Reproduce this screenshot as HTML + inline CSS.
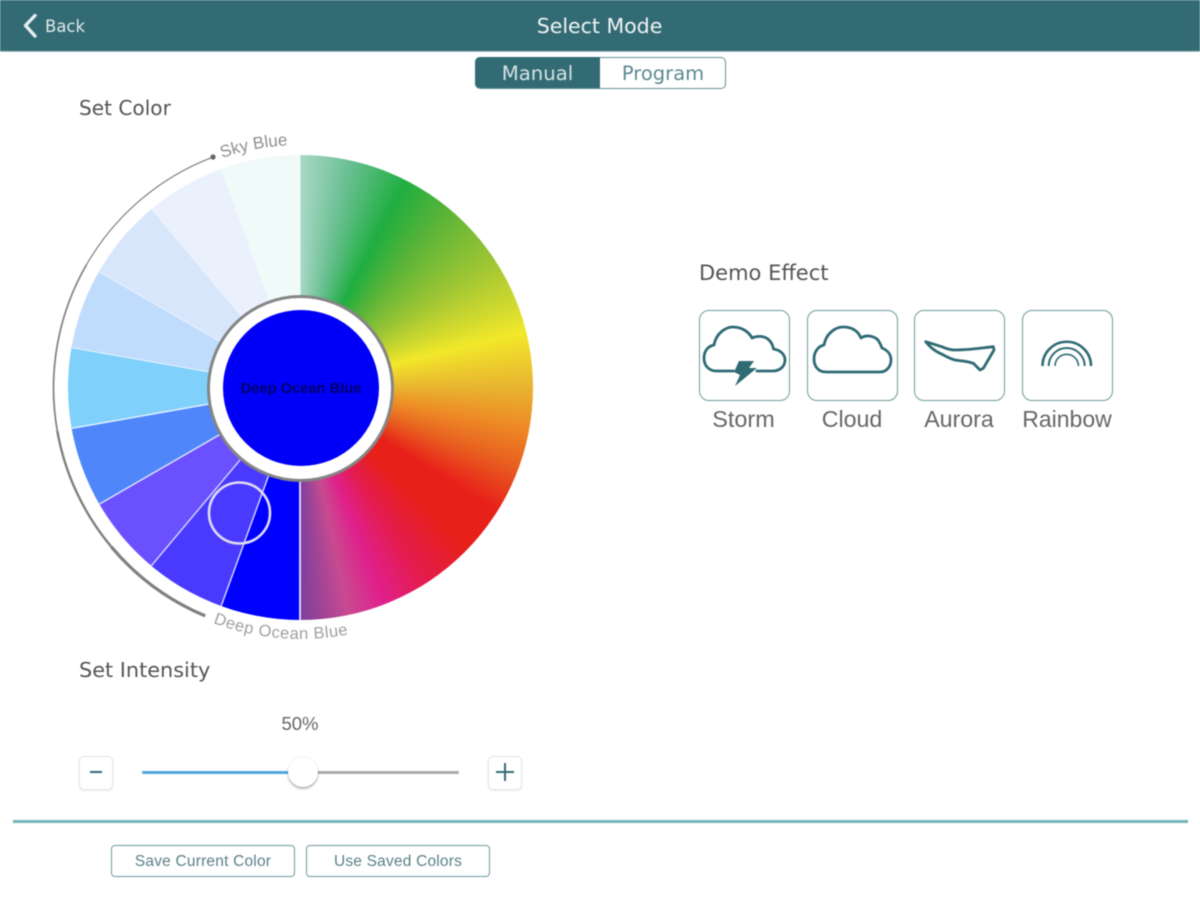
<!DOCTYPE html>
<html><head><meta charset="utf-8"><title>Select Mode</title>
<style>
html,body{margin:0;padding:0;background:#fff}
#r{position:relative;width:1200px;height:900px;overflow:hidden;background:#fff;filter:blur(.55px);font-family:"Liberation Sans",sans-serif}
.t{position:absolute;white-space:nowrap;line-height:1}
.n{font-family:"DejaVu Sans","Liberation Sans",sans-serif}
.c{transform:translateX(-50%)}
#wheel{position:absolute;left:68px;top:155px;width:465px;height:465px;border-radius:50%;
background:conic-gradient(#a9d8c6 0deg,#6cc094 12deg,#1fae40 27deg,#5cb438 40deg,#9cc534 56deg,#d2da2e 69deg,#f2e82a 76deg,#e8b430 90deg,#ee8a25 100deg,#e85f20 110deg,#e8201a 122deg,#e8201a 134deg,#e41c50 148deg,#e0208c 159deg,#c84a90 168deg,#7d3f9c 180deg,
#0000ff 180deg 200deg,#4a3aff 200deg 220deg,#6a50ff 220deg 240deg,#4f87fb 240deg 260deg,#80d0fc 260deg 280deg,#c0dcfc 280deg 300deg,#d8e6fc 300deg 320deg,#eaf1fd 320deg 340deg,#f0faf9 340deg 360deg)}
#ring{position:absolute;left:207px;top:295px;width:181px;height:181px;border:3px solid #858585;border-radius:50%;background:#fff}
#blue{position:absolute;left:222.5px;top:310px;width:156px;height:156px;border-radius:50%;background:#0000f8}
.box{position:absolute;top:310px;width:89px;height:89px;border:1.5px solid #6f9a9c;border-radius:10px;background:#fff}
.btn{position:absolute;top:845px;height:30px;border:1.5px solid #6f9a9c;border-radius:4px;background:#fff;color:#5a8088;font-size:15.5px;letter-spacing:.2px;line-height:32px;text-align:center}
.sq{position:absolute;top:756px;width:32px;height:32px;border:1px solid #e4e4e4;border-radius:5px;background:#fff;box-shadow:0 1px 2px rgba(0,0,0,.08)}
svg{position:absolute;left:0;top:0}
</style></head>
<body><div id="r">
<div style="position:absolute;left:0;top:0;width:1200px;height:51px;background:#336b75;border-bottom:1px solid #a7c8cc"></div>
<div class="t n" style="left:45px;top:18.5px;font-size:16.5px;color:#dfe9ea">Back</div>
<div class="t n c" style="left:599.5px;top:16px;font-size:20.5px;color:#f0f5f5">Select Mode</div>

<div style="position:absolute;left:475px;top:57px;width:249px;height:30px;border:1px solid #5f9296;border-radius:5px;background:#fff"></div>
<div style="position:absolute;left:475px;top:57px;width:125px;height:31px;background:#336b75;border-radius:5px 0 0 5px"></div>
<div class="t n c" style="left:537.5px;top:64px;font-size:19.7px;color:#d5e2e3">Manual</div>
<div class="t n c" style="left:663px;top:64px;font-size:19.5px;color:#5c8a90">Program</div>

<div class="t n" style="left:79px;top:98px;font-size:20.1px;color:#555">Set Color</div>
<div class="t n" style="left:79px;top:660px;font-size:20.8px;color:#555">Set Intensity</div>
<div class="t n" style="left:699px;top:263px;font-size:21px;color:#555">Demo Effect</div>

<div id="wheel"></div>
<svg width="1200" height="900" viewBox="0 0 1200 900" fill="none">
<g stroke-linecap="butt">
<line x1="300" y1="478" x2="300" y2="620" stroke="#d8d0ff" stroke-width="2"/>
<line x1="268.7" y1="475.4" x2="221.2" y2="606" stroke="#d8d8ff" stroke-width="1.4"/>
<line x1="240.7" y1="459.2" x2="151.4" y2="565.7" stroke="#d8d8ff" stroke-width="1.4"/>
<line x1="220" y1="434.5" x2="99.6" y2="504" stroke="#e0e4ff" stroke-width="1.4"/>
<line x1="208.9" y1="404.1" x2="72" y2="428.3" stroke="#e8f4ff" stroke-width="1.4"/>
<line x1="209" y1="371.9" x2="72" y2="347.7" stroke="#e8f4ff" stroke-width="1"/>
<line x1="220" y1="341.5" x2="99.6" y2="272" stroke="#edf4ff" stroke-width="1"/>
</g>
<circle cx="239.5" cy="513" r="30.5" stroke="#dedcf4" stroke-width="2.6"/>
<g stroke="#808080">
<path d="M212 157.4A247 247 0 0 0 86.6 264.5" stroke-width="1.2"/>
<path d="M86.6 264.5A247 247 0 0 0 57.3 430.9" stroke-width="1.7"/>
<path d="M57.3 430.9A247 247 0 0 0 111.3 546.8" stroke-width="2.4"/>
<path d="M111.3 546.8A247 247 0 0 0 205.2 615.9" stroke-width="3.2"/>
</g>
<circle cx="213" cy="157" r="2.6" fill="#666"/>
<path id="a1" d="M222 158A243 243 0 0 1 300 145"/>
<path id="a2" d="M213 623A251 251 0 0 0 360 632"/>
<text font-family="Liberation Sans,sans-serif" font-size="17" fill="#909090"><textPath href="#a1">Sky Blue</textPath></text>
<text font-family="Liberation Sans,sans-serif" font-size="16.5" letter-spacing=".5" fill="#a0a0a0"><textPath href="#a2">Deep Ocean Blue</textPath></text>
</svg>
<div id="ring"></div>
<div id="blue"></div>
<div class="t c" style="left:301px;top:382px;font-size:14.7px;color:#00006a;font-weight:bold">Deep Ocean Blue</div>

<div class="box" style="left:699px"></div>
<div class="box" style="left:807px"></div>
<div class="box" style="left:914px"></div>
<div class="box" style="left:1022px"></div>
<svg width="1200" height="900" viewBox="0 0 1200 900" fill="none" stroke="#2f6b75" stroke-linecap="round" stroke-linejoin="round">
<path stroke-width="2.8" d="M733.5 371H717C708 371 704 365 704 358C704 350 709 346 714 345C716 333 726 327 733 327C742 327 749 332 752 338C756 336 764 335 769 340C772 343 773 346 773.5 349C780 350 785 354 785 360C785 367 779 371 773 371H757"/>
<path stroke="none" fill="#2f6b75" d="M739 361H754L749 368H757L735 386L740 375L734 372Z"/>
<path stroke-width="2.8" d="M826 372C818 372 814 366 814 359C814 351 819 346 824 345C826 333 836 327 843 327C852 327 858 331 861 338C865 335 873 335 878 340C880 343 881 345 882 348C887 350 891 354 891 360C891 367 886 372 880 372Z"/>
<path stroke-width="2.8" d="M925.7 341.7L941.7 346.7C947 349 951 350 955 350C968 350 982 348 993.3 346.7L994 350L983.3 368.3L980 370L973.3 363.3C967 361 961 361 955 360C948 358 944 355 940 353.3C935 351 930 347 925.7 341.7Z"/>
<path stroke-width="2.6" stroke-linecap="butt" d="M1042.5 366A24.2 24.2 0 0 1 1091 366"/>
<path stroke-width="2" stroke-linecap="butt" d="M1048.7 366A18 18 0 0 1 1084.7 366"/>
<path stroke-width="1.6" stroke-linecap="butt" d="M1055 366A11.7 11.7 0 0 1 1078.4 366"/>
</svg>
<div class="t c" style="left:743.5px;top:408px;font-size:23.4px;color:#666">Storm</div>
<div class="t c" style="left:852px;top:408px;font-size:23.2px;color:#666">Cloud</div>
<div class="t c" style="left:959px;top:408px;font-size:23.2px;color:#666">Aurora</div>
<div class="t c" style="left:1067px;top:408px;font-size:23px;color:#666">Rainbow</div>

<div class="t c" style="left:300px;top:714.5px;font-size:18.5px;color:#666">50%</div>
<div class="sq" style="left:79px"></div>
<div class="sq" style="left:488px"></div>
<div style="position:absolute;left:90px;top:771px;width:12px;height:2.4px;background:#336b75"></div>
<div style="position:absolute;left:496px;top:771px;width:18px;height:2px;background:#336b75"></div>
<div style="position:absolute;left:504px;top:763px;width:2px;height:18px;background:#336b75"></div>
<div style="position:absolute;left:142px;top:770.5px;width:317px;height:3px;background:#aaa;border-radius:2px"></div>
<div style="position:absolute;left:142px;top:770.5px;width:150px;height:3px;background:#4fa8dc;border-radius:2px"></div>
<div style="position:absolute;left:287.5px;top:756.5px;width:30px;height:30px;border-radius:50%;background:#fff;box-shadow:0 2px 2px rgba(0,0,0,.28),0 0 2px rgba(0,0,0,.1)"></div>

<div style="position:absolute;left:13px;top:819.5px;width:1175px;height:3px;background:#74b5b7"></div>
<div class="btn" style="left:111px;width:182px">Save Current Color</div>
<div class="btn" style="left:306px;width:182px">Use Saved Colors</div>

<svg width="1200" height="60" viewBox="0 0 1200 60" fill="none"><path d="M35 15.5L25.5 25.5L35 36" stroke="#e6eeef" stroke-width="3.4" stroke-linecap="round" stroke-linejoin="round"/></svg>
</div></body></html>
